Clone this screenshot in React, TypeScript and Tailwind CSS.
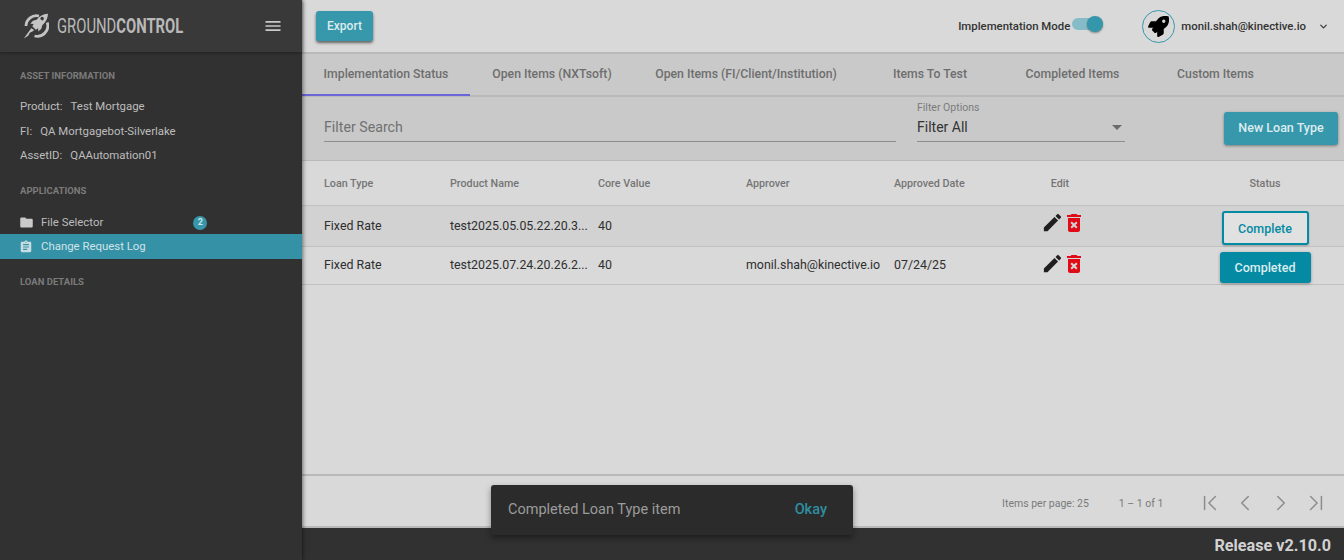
import { ChevronDown, ChevronFirst, ChevronLast, ChevronLeft, ChevronRight } from "lucide-react";
import { FaRocket } from "react-icons/fa";
import { MdAssignment, MdDeleteForever, MdEdit, MdFolder, MdMenu } from "react-icons/md";

const TABS = [
  { label: "Implementation Status", cls: "w-[168px]", active: true },
  { label: "Open Items (NXTsoft)", cls: "w-[164px]" },
  { label: "Open Items (FI/Client/Institution)", cls: "w-[224px]" },
  { label: "Items To Test", cls: "w-[144px]" },
  { label: "Completed Items", cls: "w-[141px]" },
  { label: "Custom Items", cls: "w-[145px]" },
];

const COLS = "grid grid-cols-[126px_148px_148px_148px_106px_120px_218px] items-center pl-[22px]";

const ROWS = [
  { product: "test2025.05.05.22.20.3...", core: "40", approver: "", date: "", done: false },
  { product: "test2025.07.24.20.26.2...", core: "40", approver: "monil.shah@kinective.io", date: "07/24/25", done: true },
];

function Logo() {
  return (
    <svg viewBox="0 0 26 26" className="h-[26px] w-[26px] text-[#c4c4c4]" fill="currentColor">
      <path d="M3 13a10.5 10.5 0 0 1 13-10" fill="none" stroke="currentColor" strokeWidth="2.8" />
      <path d="M24.2 9.5A10.5 10.5 0 0 1 11.5 23" fill="none" stroke="currentColor" strokeWidth="2.8" />
      <path d="M25 0.8c-5 .3-8.6 2.2-11.4 5.9l-3.6 1-2.7 3 3.4.2-1.4 2.3 3.5 3.5 2.3-1.5.2 3.3 3-2.7 1-3.6C23 8.9 24.8 5.6 25 0.8zm-4.4 5.6a1.7 1.7 0 1 1-2.4-2.3 1.7 1.7 0 0 1 2.4 2.3z" />
      <path d="M8.2 15.2 0.8 25.4l4.4-2.6 1.6-3 2.6-1.2 1.8-1.6z" />
    </svg>
  );
}

function Sidebar() {
  return (
    <aside className="z-20 flex w-[302px] shrink-0 flex-col bg-[#313131] shadow-[1px_0_4px_rgba(0,0,0,0.5)]">
      <div className="flex h-[52px] shrink-0 items-center bg-[#393939] pl-[23px] pr-[19px] shadow-[0_1px_3px_rgba(0,0,0,0.35)]">
        <Logo />
        <div className="ml-[8px] w-[125px] pt-[4px]">
          <span className="inline-block origin-left scale-x-[0.74] whitespace-nowrap text-[20px] leading-none text-[#b9b9b9]">
            GROUND<span className="font-bold">CONTROL</span>
          </span>
        </div>
        <MdMenu className="ml-auto text-[#c9c9c9]" size={20} />
      </div>

      <div className="flex flex-col pl-[20px] text-[11.4px] text-[#bdbdbd]">
        <div className="mt-[18px] text-[9.5px] font-bold uppercase leading-[12px] text-[#7b7b7b]">Asset Information</div>
        <div className="mt-[13px] flex h-[24px] items-center gap-[8px]">
          <span>Product:</span>
          <span>Test Mortgage</span>
        </div>
        <div className="mt-[1px] flex h-[24px] items-center gap-[8px]">
          <span>FI:</span>
          <span>QA Mortgagebot-Silverlake</span>
        </div>
        <div className="flex h-[24px] items-center gap-[8px]">
          <span>AssetID:</span>
          <span>QAAutomation01</span>
        </div>
        <div className="mt-[17px] text-[9.5px] font-bold uppercase leading-[12px] text-[#7b7b7b]">Applications</div>
      </div>

      <div className="mt-[13px] flex h-[24px] items-center pl-[19px] pt-[1px] text-[11.4px] text-[#bdbdbd]">
        <MdFolder size={15} className="text-[#c9c9c9]" />
        <span className="ml-[7px]">File Selector</span>
        <span className="ml-[90px] flex h-[14px] w-[14px] items-center justify-center rounded-full bg-[#3797aa] text-[9px] font-bold text-[#d0e4e8]">
          2
        </span>
      </div>
      <div className="flex h-[25px] items-center bg-[#3592a6] pl-[19px] text-[11.4px] text-[#cfe3e8]">
        <MdAssignment size={14} className="text-[#c8dde2]" />
        <span className="ml-[8px]">Change Request Log</span>
      </div>

      <div className="mt-[17px] pl-[20px] text-[9.5px] font-bold uppercase leading-[12px] text-[#7b7b7b]">Loan Details</div>
    </aside>
  );
}

function TopBar() {
  return (
    <div className="flex h-[54px] shrink-0 items-center border-b-2 border-[#b9b9b9] bg-[#d9d9d9] pl-[14px] pr-[15px]">
      <button className="h-[30px] w-[57px] rounded-[3px] bg-[#3797ab] text-[12px] font-medium text-[#dcecef] shadow-[0_2px_3px_rgba(0,0,0,0.55)]">
        Export
      </button>
      <span className="ml-auto mt-[2px] text-[11.4px] font-medium text-[#333]">Implementation Mode</span>
      <div className="relative ml-[2px] -mt-[4px] h-[12px] w-[31px] rounded-full bg-[#86bcc8]">
        <span className="absolute -top-[2px] right-0 h-[16px] w-[16px] rounded-full bg-[#3597ab] shadow-[0_1px_2px_rgba(0,0,0,0.4)]" />
      </div>
      <div className="ml-[39px] flex h-[33px] w-[33px] items-center justify-center rounded-full border-[1.5px] border-[#3797ab]">
        <FaRocket size={21} className="text-black" />
      </div>
      <span className="ml-[6px] mt-[2px] text-[11.4px] font-medium text-[#333]">monil.shah@kinective.io</span>
      <ChevronDown size={11} strokeWidth={2.5} className="ml-[12px] text-[#333]" />
    </div>
  );
}

function Tabs() {
  return (
    <div className="flex h-[43px] shrink-0 border-b-2 border-[#b9b9b9] bg-[#c9c9c9]">
      {TABS.map((t) => (
        <div
          key={t.label}
          className={`relative flex h-[41px] items-center justify-center pb-[1px] text-[12.25px] font-medium text-[#6e6e6e] ${t.cls}`}
        >
          {t.label}
          {t.active && <span className="absolute inset-x-0 -bottom-[1px] h-[2px] bg-[#6a66d8]" />}
        </div>
      ))}
    </div>
  );
}

function Filters() {
  return (
    <div className="flex h-[64px] shrink-0 border-b border-[#b9b9b9] bg-[#c9c9c9] pl-[22px] pr-[6px]">
      <div className="mt-[21px] flex h-[24px] w-[572px] items-center border-b border-[#8d8d8d] pb-[4px] text-[14.2px] text-[#717171]">
        Filter Search
      </div>
      <div className="ml-[21px] w-[208px]">
        <div className="mt-[5px] text-[10.5px] leading-[12px] text-[#7b7b7b]">Filter Options</div>
        <div className="mt-[4px] flex h-[24px] items-center justify-between border-b border-[#8d8d8d] pb-[4px] pr-[3px] text-[14px] text-[#333]">
          Filter All
          <span className="h-0 w-0 border-x-[5px] border-t-[5px] border-x-transparent border-t-[#6b6b6b]" />
        </div>
      </div>
      <button className="ml-auto mt-[15px] h-[33px] w-[114px] rounded-[3px] bg-[#3797ab] text-[12.5px] font-medium text-[#dcecef] shadow-[0_1px_3px_rgba(0,0,0,0.4)]">
        New Loan Type
      </button>
    </div>
  );
}

function LoanTable() {
  return (
    <div className="flex min-h-0 flex-1 flex-col bg-[#d9d9d9]">
      <div className={`${COLS} h-[45px] shrink-0 border-b border-[#c1c1c1] pt-[2px] text-[10.75px] font-medium text-[#757575]`}>
        <span>Loan Type</span>
        <span>Product Name</span>
        <span>Core Value</span>
        <span>Approver</span>
        <span>Approved Date</span>
        <span className="text-center">Edit</span>
        <span className="pl-[72px] text-center">Status</span>
      </div>
      {ROWS.map((r) => (
        <div
          key={r.product}
          className={`${COLS} shrink-0 border-b border-[#c1c1c1] text-[12.4px] text-[#2f2f2f] ${
            r.done ? "h-[38px]" : "h-[41px] bg-[#d2d2d2]"
          }`}
        >
          <span>Fixed Rate</span>
          <span className="whitespace-nowrap">{r.product}</span>
          <span>{r.core}</span>
          <span className="whitespace-nowrap">{r.approver}</span>
          <span>{r.date}</span>
          <span className={`ml-[6px] flex justify-center ${r.done ? "-mt-[4px]" : "-mt-[6px]"}`}>
            <MdEdit size={23} className="text-[#1f1f1f]" />
            <MdDeleteForever size={24} className="-ml-[2px] text-[#e00b16]" />
          </span>
          <span className="flex justify-center pl-[72px]">
            {r.done ? (
              <button className="mt-[4px] h-[31px] w-[91px] rounded-[3px] bg-[#048ba3] pt-[2px] text-[12.5px] font-medium text-[#dcecef] shadow-[0_1px_3px_rgba(0,0,0,0.35)]">
                Completed
              </button>
            ) : (
              <button className="mt-[4px] h-[34px] w-[87px] rounded-[3px] border-2 border-[#048ba3] bg-[#e1e1e1] pt-[2px] text-[12.5px] font-medium text-[#048ba3] shadow-[0_1px_2px_rgba(0,0,0,0.25)]">
                Complete
              </button>
            )}
          </span>
        </div>
      ))}
    </div>
  );
}

function Paginator() {
  return (
    <div className="flex h-[54px] shrink-0 items-center justify-end border-y-2 border-[#b9b9b9] bg-[#d9d9d9] pr-[15px] pt-[3px] text-[10.5px] text-[#7a7a7a]">
      <span className="mt-[2px]">Items per page: 25</span>
      <span className="ml-[30px] mt-[2px]">1 – 1 of 1</span>
      <div className="ml-[33px] flex items-center gap-[9.5px] text-[#8d8d8d]">
        <ChevronFirst size={26} strokeWidth={1.4} />
        <ChevronLeft size={26} strokeWidth={1.4} />
        <ChevronRight size={26} strokeWidth={1.4} />
        <ChevronLast size={26} strokeWidth={1.4} />
      </div>
    </div>
  );
}

export default function App() {
  return (
    <div className="relative flex h-[560px] w-[1344px] overflow-hidden bg-[#d9d9d9] font-['Roboto',sans-serif]">
      <Sidebar />
      <main className="flex min-w-0 flex-1 flex-col">
        <TopBar />
        <Tabs />
        <Filters />
        <LoanTable />
        <Paginator />
        <div className="flex h-[32px] shrink-0 items-center justify-end bg-[#313131] pr-[13px] pt-[4px] text-[16.2px] font-bold text-[#d2d2d2]">
          Release v2.10.0
        </div>
      </main>

      {/* snackbar floats over the paginator and footer */}
      <div className="absolute left-[491px] top-[485px] z-30 flex h-[50px] w-[362px] items-center justify-between rounded-[3px] bg-[#2b2b2b] pl-[17px] pr-[26px] text-[14.5px] shadow-[0_3px_6px_rgba(0,0,0,0.4)]">
        <span className="text-[#9b9b9b]">Completed Loan Type item</span>
        <span className="font-medium text-[#2f8ea1]">Okay</span>
      </div>
    </div>
  );
}
